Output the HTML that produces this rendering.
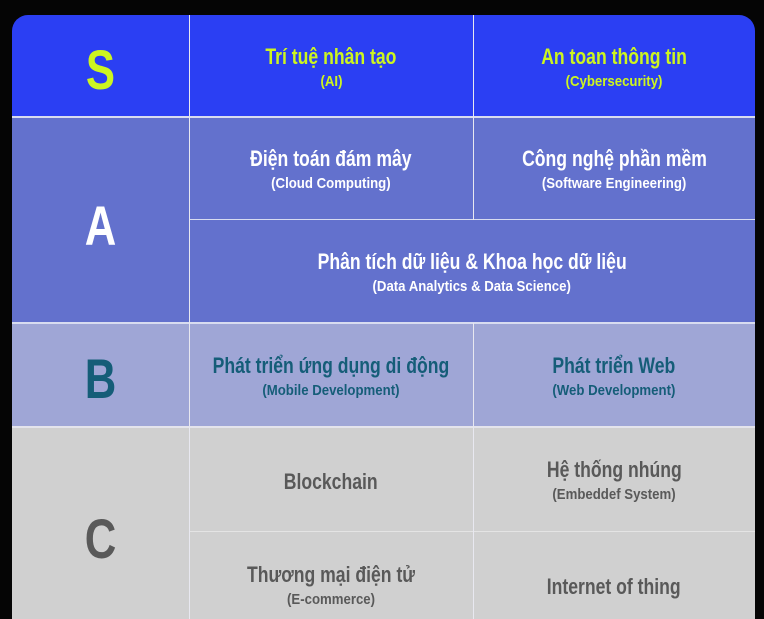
<!DOCTYPE html>
<html><head><meta charset="utf-8"><style>
body{margin:0;width:764px;height:619px;background:#050505;overflow:hidden;position:relative;font-family:"Liberation Sans",sans-serif;font-weight:bold}
.card{position:absolute;left:12px;top:15px;width:743px;height:604px;border-radius:16px 16px 0 0;overflow:hidden}
.r{position:absolute;left:0;width:743px}
.c{position:absolute;display:flex;flex-direction:column;align-items:center;justify-content:center;text-align:center}
.t{font-size:22px;line-height:27px;transform:scaleX(0.8);white-space:nowrap}
.s{font-size:15px;line-height:24px;transform:scaleX(0.88);white-space:nowrap}
.big{font-size:56px;transform:scaleX(0.78)}
.v{position:absolute;width:1px;background:#e8e8f0}
.h{position:absolute;height:2px;background:#d8dcf0}
</style></head><body>
<div class="card">
<div class="r" style="top:0;height:102px;background:#2b3ff3"></div>
<div class="r" style="top:102px;height:206px;background:#6371cd"></div>
<div class="r" style="top:308px;height:104px;background:#9fa6d6"></div>
<div class="r" style="top:412px;height:192px;background:#d0d0d0"></div>
<div class="h" style="left:0;top:101px;width:743px"></div>
<div class="h" style="left:0;top:307px;width:743px"></div>
<div class="h" style="left:0;top:411px;width:743px;background:#e4e4ec"></div>
<div class="h" style="left:177px;top:204px;width:566px;height:1px"></div>
<div class="h" style="left:177px;top:516px;width:566px;height:1px;background:#e4e4e4"></div>
<div class="v" style="left:177px;top:0;height:604px"></div>
<div class="v" style="left:461px;top:0;height:205px"></div>
<div class="v" style="left:461px;top:308px;height:296px"></div>

<div class="c big" style="left:0;top:0;width:177px;height:108px;color:#cdf520">S</div>
<div class="c" style="left:177px;top:2px;width:284px;height:102px;color:#cdf520"><div class="t">Trí tuệ nhân tạo</div><div class="s">(AI)</div></div>
<div class="c" style="left:461px;top:2px;width:282px;height:102px;color:#cdf520"><div class="t">An toan thông tin</div><div class="s">(Cybersecurity)</div></div>

<div class="c big" style="left:0;top:102px;width:177px;height:216px;color:#fff">A</div>
<div class="c" style="left:177px;top:104px;width:284px;height:103px;color:#fff"><div class="t">Điện toán đám mây</div><div class="s">(Cloud Computing)</div></div>
<div class="c" style="left:461px;top:104px;width:282px;height:103px;color:#fff"><div class="t">Công nghệ phần mềm</div><div class="s">(Software Engineering)</div></div>
<div class="c" style="left:177px;top:207px;width:566px;height:103px;color:#fff"><div class="t">Phân tích dữ liệu &amp; Khoa học dữ liệu</div><div class="s">(Data Analytics &amp; Data Science)</div></div>

<div class="c big" style="left:0;top:308px;width:177px;height:110px;color:#155d78">B</div>
<div class="c" style="left:177px;top:310px;width:284px;height:104px;color:#155d78"><div class="t">Phát triển ứng dụng di động</div><div class="s">(Mobile Development)</div></div>
<div class="c" style="left:461px;top:310px;width:282px;height:104px;color:#155d78"><div class="t">Phát triển Web</div><div class="s">(Web Development)</div></div>

<div class="c big" style="left:0;top:412px;width:177px;height:192px;color:#595959;padding-top:30px;box-sizing:border-box">C</div>
<div class="c" style="left:177px;top:414px;width:284px;height:105px;color:#595959"><div class="t">Blockchain</div></div>
<div class="c" style="left:461px;top:414px;width:282px;height:105px;color:#595959"><div class="t">Hệ thống nhúng</div><div class="s">(Embeddef System)</div></div>
<div class="c" style="left:177px;top:519px;width:284px;height:105px;color:#595959"><div class="t">Thương mại điện tử</div><div class="s">(E-commerce)</div></div>
<div class="c" style="left:461px;top:519px;width:282px;height:105px;color:#595959"><div class="t">Internet of thing</div></div>
</div>
</body></html>
